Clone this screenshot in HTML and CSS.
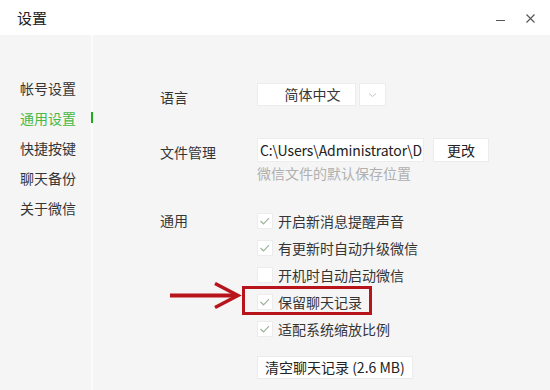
FILE: index.html
```html
<!DOCTYPE html>
<html lang="zh-CN">
<head>
    <meta charset="UTF-8">
    <title>设置</title>
    <link rel="stylesheet" href="styles.css">
</head>
<body>
    <div class="titlebar">
        <span class="title">设置</span>
        <div class="controls">
            <span class="min-btn"></span>
            <svg class="close-btn" width="9" height="9" viewBox="0 0 9 9">
                <path d="M0.5 0.5 L8.5 8.5 M8.5 0.5 L0.5 8.5" stroke="#555" stroke-width="1.1" fill="none"/>
            </svg>
        </div>
    </div>

    <div class="main">
        <div class="nav">
            <div class="nav-item">帐号设置</div>
            <div class="nav-item active">通用设置</div>
            <div class="nav-item">快捷按键</div>
            <div class="nav-item">聊天备份</div>
            <div class="nav-item">关于微信</div>
        </div>

        <div class="content">
            <!-- language -->
            <div class="row row-lang">
                <div class="label">语言</div>
                <div class="select">
                    <span class="select-value">简体中文</span>
                    <span class="select-arrow">
                        <svg width="9" height="6" viewBox="0 0 9 6">
                            <path d="M1 1.5 L4.5 4.5 L8 1.5" stroke="#c4c4c4" stroke-width="1" fill="none"/>
                        </svg>
                    </span>
                </div>
            </div>

            <!-- file path -->
            <div class="row row-file">
                <div class="label">文件管理</div>
                <div class="field">
                    <div class="path-line">
                        <div class="path-input">C:\Users\Administrator\D</div>
                        <div class="btn btn-change">更改</div>
                    </div>
                    <div class="hint">微信文件的默认保存位置</div>
                </div>
            </div>

            <!-- general -->
            <div class="row row-general">
                <div class="label">通用</div>
                <div class="field">
                    <div class="check-row">
                        <span class="check-box checked"></span>开启新消息提醒声音
                    </div>
                    <div class="check-row">
                        <span class="check-box checked"></span>有更新时自动升级微信
                    </div>
                    <div class="check-row">
                        <span class="check-box"></span>开机时自动启动微信
                    </div>
                    <div class="check-row marked">
                        <svg class="mark-arrow" width="74" height="28" viewBox="0 0 74 28">
                            <path d="M0 13.5 L66 13.5" stroke="#b8141c" stroke-width="4" fill="none"/>
                            <path d="M45 1.5 L68 13.5 L45 25.5" stroke="#b8141c" stroke-width="3.5" fill="none"/>
                        </svg>
                        <span class="mark-box"></span>
                        <span class="check-box checked"></span>保留聊天记录
                    </div>
                    <div class="check-row">
                        <span class="check-box checked"></span>适配系统缩放比例
                    </div>
                    <div class="btn btn-clear">清空聊天记录 (2.6 MB)</div>
                </div>
            </div>
        </div>
    </div>
</body>
</html>
```

FILE: styles.css
```css
body {
    margin: 0;
    width: 550px;
    height: 390px;
    overflow: hidden;
    background-color: #f5f5f5;
    color: #353535;
    font-family: "Noto Sans CJK SC", "Noto Sans", sans-serif;
    font-size: 14px;
}

.titlebar {
    height: 35px;
    background-color: #ffffff;
    display: flex;
    align-items: center;
    justify-content: space-between;
    padding: 0 15px 0 17px;
}

.title {
    font-size: 15px;
    color: #222;
}

.controls {
    display: flex;
    align-items: center;
    gap: 21px;
    padding-top: 2px;
}

.min-btn {
    display: block;
    width: 9px;
    height: 1px;
    background-color: #555;
    margin-top: 3px;
}

.main {
    display: flex;
    height: 355px;
}

.nav {
    width: 91px;
    border-right: 2px solid #fbfbfb;
    padding-top: 38px;
}

.nav-item {
    position: relative;
    height: 30px;
    line-height: 30px;
    padding-left: 20px;
    color: #353535;
}

.nav-item.active {
    color: #46b946;
}

.nav-item.active::after {
    content: "";
    position: absolute;
    right: -2px;
    top: 9px;
    width: 2px;
    height: 11px;
    background-color: #1aad19;
}

.content {
    padding: 48px 0 0 67px;
}

.row {
    display: flex;
}

.label {
    width: 97px;
    flex-shrink: 0;
}

.row-lang .label {
    line-height: 23px;
    padding-top: 3px;
}

.select {
    display: flex;
    gap: 3px;
    height: 23px;
}

.select-value {
    width: 85px;
    padding-left: 12px;
    background-color: #ffffff;
    border: 1px solid #ececec;
    text-align: center;
    line-height: 21px;
}

.select-arrow {
    width: 25px;
    background-color: #ffffff;
    border: 1px solid #ececec;
    display: flex;
    align-items: center;
    justify-content: center;
}

.row-file {
    margin-top: 29px;
}

.row-file .label {
    line-height: 24px;
    padding-top: 2px;
}

.path-line {
    display: flex;
    gap: 9px;
}

.path-input {
    width: 167px;
    height: 24px;
    box-sizing: border-box;
    padding-left: 2px;
    background-color: #ffffff;
    border: 1px solid #ededed;
    line-height: 22px;
    font-size: 14px;
    letter-spacing: -0.1px;
    white-space: nowrap;
    overflow: hidden;
    color: #222;
}

.btn {
    background-color: #ffffff;
    border: 1px solid #ebebeb;
    box-sizing: border-box;
    color: #222;
}

.btn-change {
    width: 56px;
    height: 24px;
    line-height: 22px;
    text-align: center;
}

.hint {
    margin-top: 1px;
    line-height: 20px;
    color: #b0b0b0;
}

.row-general {
    margin-top: 24px;
}

.row-general .label {
    line-height: 27px;
}

.check-row {
    position: relative;
    display: flex;
    align-items: center;
    gap: 5px;
    height: 27px;
}

.check-box {
    width: 16px;
    height: 16px;
    box-sizing: border-box;
    background-color: #ffffff;
    border: 1px solid #ececec;
}

.check-box.checked {
    background-image: url("data:image/svg+xml,%3Csvg xmlns='http://www.w3.org/2000/svg' width='16' height='16' viewBox='0 0 16 16'%3E%3Cpath d='M3.5 8 L6.5 10.8 L12 5.2' stroke='%239eb49e' stroke-width='1.2' fill='none'/%3E%3C/svg%3E");
    background-position: -1px -1px;
}

.mark-box {
    position: absolute;
    left: -15px;
    top: -2px;
    width: 130px;
    height: 29px;
    box-sizing: border-box;
    border: 3.5px solid #b8141c;
}

.mark-arrow {
    position: absolute;
    left: -87px;
    top: -6px;
}

.btn-clear {
    display: inline-block;
    margin-top: 14px;
    height: 23px;
    line-height: 21px;
    padding: 0 7px;
}
```
